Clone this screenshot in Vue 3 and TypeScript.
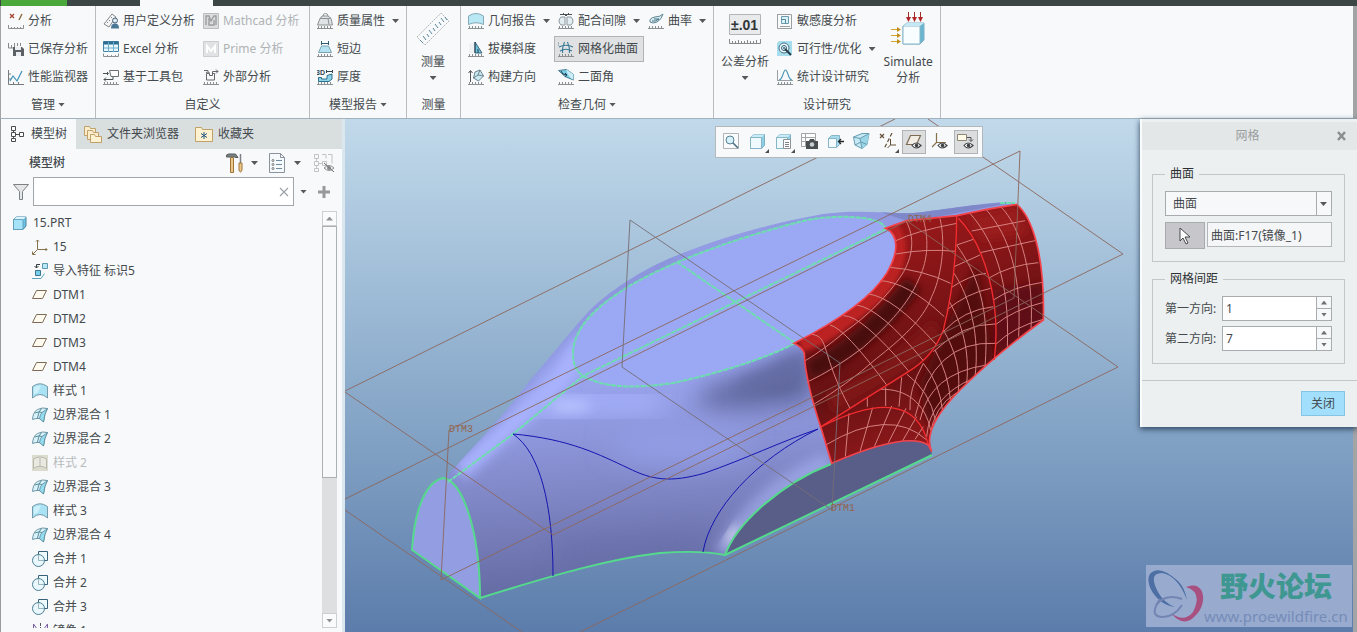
<script setup lang="ts">
import { ref } from 'vue'

interface Command { label: string; icon: string; arrow?: boolean; disabled?: boolean; active?: boolean }
interface Block { big?: boolean; second?: string; items: Command[] }
interface Group { title: string; arrow?: boolean; blocks: Block[] }
interface TreeItem { label: string; icon: string; root?: boolean; dim?: boolean }

const ruler = '<path d="M.5 12v3.500h15V12M3.500 14v1M6.500 14v1M9.500 14v1M12.500 14v1" fill="none" stroke="#8b9093"/>'
const rulerFlat = '<path d="M0 15.500h16M1.500 13v2M4.500 13v2M7.500 13v2M10.500 13v2M13.500 13v2" fill="none" stroke="#8b9093"/>'
const eye = '<path d="M7 12.500q4-5 9 0q-5 5-9 0z" fill="#fff" stroke="#3c4145" stroke-width="1.200"/><circle cx="11.500" cy="12.500" r="1.800" fill="#3c4145"/>'
const cube = '<path d="M1.500 4.500l3-3h11v11l-3 3h-11z" fill="#8fcfe4" stroke="#7fb0c4"/><path d="M1.500 4.500l3-3h11l-3 3z" fill="#c8ebf6"/><path d="M1.500 4.500h11v11h-11z" fill="#eefafe" stroke="#86b5c8"/>'
const blend = '<path d="M.5 12.500Q1 5 5.500 2.500q5-2.500 10-1q-3 4-4 13.500q-2-3-4.500-3.500q-3-.5-6.500 1z" fill="#d8f3fa" stroke="#6f95a4"/><path d="M10 5.500l5.500-4q-3 4-4 13.500l-4-3.500q.5-4 2.500-6z" fill="#93dcf0" stroke="#5b8a9c" stroke-width=".8"/><path d="M3 6q4-2 7-.5M9.500 1.500Q6.500 4 5.500 11" fill="none" stroke="#5b8a9c"/>'
const style = '<path d="M.5 15V3.500Q8-2 15.500 3.500V15Q8 8 .5 15z" fill="#a9e2f4" stroke="#7899a8"/><path d="M2 11.500V4.500Q5 2.500 9 2.500L6 9.500q-2 .5-4 2z" fill="#cdf0fa"/>'

const icons: Record<string, string> = {
  analysis: ruler + '<path d="M2 1l4 4M6 1L2 5" stroke="#a3442e" stroke-width="1.300"/><path d="M14 1l-3 6" stroke="#8a6b3c" stroke-width="1.400"/>',
  saved: '<path d="M.5 2v5h6M3.500 4v3M6.500 2v4M9.500 2v3M12.500 2v3" fill="none" stroke="#85898c"/><path d="M5 6h9l2 2v7H5z" fill="#5c6165"/><path d="M7 6h6v3H7zM8 11h5v4H8z" fill="#eceff1"/>',
  monitor: '<path d="M.5 1v14.500H16M1 5h2M1 10h2M5.500 13v2M10.500 13v2" fill="none" stroke="#767b7e"/><path d="M2 12l3-5 4 5 5-10" fill="none" stroke="#3d92b8" stroke-width="1.200"/>',
  user: '<path d="M1 11L9 1l4 3-7 10z" fill="#f4f5f6" stroke="#85898c"/><path d="M4 9l1 1M6 7l1 1M8 4l1 1" stroke="#85898c"/><circle cx="12" cy="7.500" r="2.500" fill="#dfeaf0" stroke="#45637a"/><path d="M8 15.500q0-5 4-5t4 5z" fill="#4a7896"/>',
  excel: '<path d="M.5.5h15v10H.5z" fill="#e8f7fc" stroke="#4686a5"/><path d="M.5.5h15v3H.5z" fill="#2d6d92"/><path d="M5.500 1v10M10.500 1v10M1 7h14" stroke="#6aaecb"/><path d="M.5 12.500v3h15v-3M4.500 14v1M8.500 14v1M12.500 14v1" fill="none" stroke="#8b9093"/>',
  kit: '<path d="M6.500 1.500h9v6H8z" fill="#fff" stroke="#6b7073"/><path d="M0 4.500h5M4 3l1.500 1.500L4 6M1 10.500h9V8M3 8.500l-2 2 2 2" fill="none" stroke="#4c5154"/>' + rulerFlat,
  mathcad: '<path d="M.5.5h15v15H.5z" fill="#dcddde" stroke="#babcbd"/><path d="M3 12V3h3l2 5 3-5h2v9M6 5v7h5V7" fill="none" stroke="#9b9d9e" stroke-width="1.400"/>',
  prime: '<path d="M.5.5h15v15H.5z" fill="#e1e2e3" stroke="#cbcdce"/><path d="M4 12V5l4 5 4-5v7" fill="none" stroke="#fff" stroke-width="2"/>',
  external: '<path d="M3.500 4.500v6.500h8V4.500h-2v2h-3v-2z" fill="#f7f9fa" stroke="#65696c"/><path d="M1 1.500h4v3M9.500 5V2.500H15M13 .5l2 2-2 2M3 3l2 1.500L6.500 3" fill="none" stroke="#65696c"/>' + rulerFlat,
  mass: rulerFlat + '<path d="M3 5.500L5 3h6l3 2.500 1.500 6.500h-15z" fill="#dfe3e5" stroke="#8b9194"/><path d="M6 3q0-2.500 2.500-2.500T11 3M3 5.500h8l1 6M11 5.500L14 5" fill="none" stroke="#8b9194"/>',
  edge: rulerFlat + '<path d="M4.500 5h7l3 6.500h-13z" fill="#b5e2f0" stroke="#7da3b2"/><path d="M4.500 0v4M11.500 0v4M5 2.500h6" stroke="#335d73"/>',
  thick: rulerFlat + '<text x="-1" y="6" font-family="Liberation Sans" font-size="7" font-weight="bold" fill="#34444e">3D</text><path d="M9 2.500h6M9.500 1v3M15.500 1v3" stroke="#34444e"/><path d="M1.500 8.500h3V10H10V6.500l5-1.500v5l-3 2.500H1.500z" fill="#8fd3e9" stroke="#2f718b"/>',
  measure: '<path d="M1 25L25 1l8 8L9 33z" fill="#f7f9fa" stroke="#b0b5b8" stroke-dasharray="2 1"/><path d="M7 31l-3-3M10 28l-3-4M13 25l-2-3M16 22l-3-4M19 19l-2-3M22 16l-3-4M25 13l-2-3M28 10l-3-4M31 8l-2-3" stroke="#58879b"/>',
  geom: '<path d="M.5 11.500V3Q8-2 15.500 3v8.500Q8 8 .5 11.500z" fill="#b9e8f5" stroke="#84a8b6"/>' + rulerFlat,
  draft: rulerFlat + '<path d="M1 3l6-2v11H1z" fill="#eef1f3"/><path d="M7 1l7 11H7z" fill="#6cc3de" stroke="#40687a"/><path d="M7 12V1M10 8v4" stroke="#243f4d"/>',
  direction: rulerFlat + '<path d="M2.500 13V2M.5 4l2-2.500 2 2.500" fill="none" stroke="#50565a"/><path d="M7 3l5-2 3.500 6-5 5-5-3z" fill="#c9e9f3" stroke="#6d838e"/><path d="M5.500 9L10 6l5.500 1M10 6l2-5" fill="none" stroke="#6d838e"/>',
  clearance: '<path d="M3 4h4v8H3q-4-4 0-8zM9 4h4q4 4 0 8H9z" fill="#e3eef2" stroke="#8d999f"/><path d="M2 1.500h12M5 0l3 3M11 0L8 3" stroke="#4a5054" fill="none"/>' + rulerFlat,
  mesh: rulerFlat + '<path d="M1 6q7-3.500 14 0M2 10q6-3.500 12 0M6.500 1q-2.500 6-2 11M9.500 1q2.500 6 2 11" fill="none" stroke="#3b7a96" stroke-width="1.100"/><path d="M.5 1v4" stroke="#a8b6bd"/>',
  dihedral: '<path d="M.5 1.500l8-1 7 5v5.500L7 7.500z" fill="#7accE5" stroke="#4a7d92"/><path d="M8.500.5l7 5v5.500q-6-3-7-10.500z" fill="#caeef8"/><path d="M3 2q1 4 6 4M7 4l2 2-2 1.500" fill="none" stroke="#22404d"/>' + rulerFlat,
  curve: '<path d="M2 9Q1 5 7 4q5 0 8-3-1 5-6 8-4 2-7 0z" fill="#d8edf3" stroke="#5f8594"/><path d="M4 8q3 1 7-2M6 6h5" fill="none" stroke="#47707f"/>' + rulerFlat,
  tolerance: '<path d="M1.500 2.500h31v20h-31z" fill="#e8eaeb" stroke="#b1b5b8"/><text x="3" y="18" font-family="Liberation Sans" font-size="14" font-weight="bold" fill="#303538">±.01</text><path d="M1.500 27v4.500h31V27M4.500 29v2M7.500 29v2M10.500 28v3M13.500 29v2M16.500 29v2M19.500 28v3M22.500 29v2M25.500 29v2M28.500 28v3" fill="none" stroke="#85898c"/>',
  sensitivity: '<path d="M.5 1v14.500H15M.5 1.500h14v14M3 13.500h10" fill="none" stroke="#9ba0a3"/><path d="M4.500 3.500h7v7h-7z" fill="#d9f2fa" stroke="#6b9aad"/><path d="M4.500 6.500h4v4" fill="none" stroke="#55869a"/>',
  feasible: '<path d="M0 2l2-2h13v13l-2 2H0z" fill="#a7ddec"/><circle cx="7" cy="7" r="5" fill="#eefafd" stroke="#427088"/><circle cx="7" cy="7" r="2.500" fill="none" stroke="#326078"/><circle cx="7" cy="7" r="1" fill="#326078"/><path d="M8 8l6 6" stroke="#253b46" stroke-width="2"/>',
  stats: '<path d="M.5 1v11M0 11.500h16" stroke="#9ba0a3"/><path d="M2 11C6 11 6 1 8.500 1S11 11 15 11" fill="none" stroke="#4996b5" stroke-width="1.200"/>' + rulerFlat,
  simulate: '<path d="M12 14l4-3h17v17l-4 4H12z" fill="#68b5cf" stroke="#7fb2c5"/><path d="M12 14h17v18H12z" fill="#f8fdff" stroke="#88b6c7"/><path d="M12 14l4-3h17l-4 3z" fill="#c4e8f4"/><path d="M17.500 0v6M23.500 0v6M29.500 0v6" stroke="#a02c2c"/><path d="M15 5h5l-2.500 5zM21 5h5l-2.500 5zM27 5h5l-2.500 5z" fill="#b02626"/><path d="M0 17.500h8M0 23.500h8M0 29.500h8" stroke="#d6a62c"/><path d="M6 15v5l4-2.500zM6 21v5l4-2.500zM6 27v5l4-2.500z" fill="#c08f20"/>',
  treeTab: '<path d="M1.500.5h4v4h-4zM1.500 6.500h4v4h-4zM1.500 12.500h4v3h-4zM9.500 6.500h4v4h-4zM3.500 4.500v2M3.500 10.500v2M5.500 8.500h4" fill="#fff" stroke="#484d50"/>',
  folders: '<path d="M.5 1.500h5l1 2h5v7H.5z" fill="#fbeccb" stroke="#c2a069"/><path d="M3.500 5.500h5l1 2h5v7h-11z" fill="#fbeccb" stroke="#c2a069"/><path d="M6.500 9.500h4l1 2h6v6h-11z" fill="#fff2d1" stroke="#c2a069"/>',
  favorite: '<path d="M.5 2.500h6l1 2h10v12H.5z" fill="#fff2d1" stroke="#c2a069"/><path d="M9 7v7M6 8.500l6 4M12 8.500l-6 4" stroke="#225a82"/>',
  hammer: '<path d="M.5 2l2-1h7l2.500 3.500h-2L8.500 4H.5z" fill="#7b8388" stroke="#555a5d"/><path d="M4.500 4.500h3v15h-3z" fill="#edc78a" stroke="#9e7439"/><path d="M14.500 1v9" stroke="#7c8185" stroke-width="1.500"/><path d="M13 10h3v7q-1.500 4-3 0z" fill="#edc78a" stroke="#9e7439"/>',
  list: '<path d="M.5.5h11l4 4v15H.5z" fill="#f7fafd" stroke="#8a939b"/><path d="M11.500.5v4h4" fill="none" stroke="#8a939b"/><circle cx="4" cy="7.500" r="1" fill="none" stroke="#777"/><circle cx="4" cy="11.500" r="1" fill="none" stroke="#777"/><circle cx="4" cy="15.500" r="1" fill="none" stroke="#777"/><path d="M7 7.500h6M7 11.500h6M7 15.500h6" stroke="#6d8ba4"/>',
  hidden: '<path d="M.5 1.500h4v4h-4zM.5 8.500h4v4h-4zM.5 15.500h4v3h-4zM8.500 8.500h4v4h-4zM8 1.500h4v4M14 1.500h4v9M2.500 6v2M2.500 13v2M5 10.500h3" fill="none" stroke="#c0c4c6"/><path d="M10 15q5-5 10 0q-5 5-10 0z" fill="#e9ebec" stroke="#8c9093"/><circle cx="15" cy="15" r="2" fill="#8c9093"/><path d="M10 10l10 9" stroke="#6a6e71"/>',
  funnel: '<path d="M.5.5h15l-6 7v8h-3v-8z" fill="#e4e6e7" stroke="#7b8184"/>',
  part: '<path d="M1.500 4.500l3-2.500h9.500v9L11 14.500H1.500z" fill="#6cc3e2" stroke="#4a87a2"/><path d="M1.500 4.500l3-2.500H14l-3 2.500z" fill="#d8f4fc"/><path d="M1.500 4.500H11v10H1.500z" fill="#a5e3f8" stroke="#5d9bb6" stroke-width=".8"/>',
  csys: '<path d="M5.500 1v9.500H15M5.500 10.500L1 15M4 2.500l1.500-1.500L7 2.500M13.500 9l1.500 1.500-1.500 1.500M.5 12.500V15.500H3.500" fill="none" stroke="#87704c"/>',
  imported: '<path d="M10.500.5h5v5h-5z" fill="#b5e7f6" stroke="#5e97b0"/><path d="M8 1.500H4.500V5M2.500 3l2 2 2-2" fill="none" stroke="#333b40"/><path d="M3.500 7.500h5v5h-5z" fill="#79cfeb" stroke="#39758f"/><path d="M0 15.500h9l3.500-5" fill="none" stroke="#5ba3bf"/>',
  plane: '<path d="M4.500 3.500h10l-4 8H.5z" fill="#fffaf0" stroke="#7d6b55"/>',
  style, blend,
  styleDim: '<path d="M0 0h16v16H0z" fill="#dcdbd0"/><path d="M1.500 13.500V4Q8 0 14.500 4v9.500Q8 9 1.500 13.500z" fill="#e9e9e2" stroke="#b9b9ad"/><path d="M8 3v8" stroke="#b9b9ad"/>',
  merge: '<path d="M6.500.5h9v9h-9z" fill="#eefcff" stroke="#3a617b"/><circle cx="6.500" cy="9.500" r="6" fill="#e5f8fc" fill-opacity=".85" stroke="#4d7d93"/><path d="M6.500 4v5.500H12" fill="none" stroke="#9fb5be"/>',
  mirror: '<path d="M1.500 1v13l5-6zM15.500 1v13l-5-6z" fill="none" stroke="#7a5fa0"/><path d="M8.500 0v16" stroke="#555" stroke-dasharray="3 1"/>',
  zoom: '<path d="M.5.5h15v15H.5z" fill="#f9fbfc" stroke="#b0b4b7"/><circle cx="7" cy="7" r="4" fill="#d7f1fa" stroke="#587f93"/><path d="M10 10l5 5" stroke="#4b6f80" stroke-width="1.600"/>',
  shade: cube,
  views: cube + '<path d="M8.500 6.500h7v9h-7z" fill="#fff" stroke="#8c9295"/><path d="M10 9.500h4M10 11.500h4M10 13.500h4" stroke="#7c8285"/>',
  camera: '<path d="M.5.5h14v13H.5zM.5 4.500h14M.5 8.500h14M4.500.5v13" fill="#fff" stroke="#a0a5a8"/><path d="M5 8h3l1-2h4l1 2h3v8H5z" fill="#494e51"/><circle cx="11" cy="11.500" r="2.300" fill="#c9ced1"/>',
  exit: '<path d="M1.500 5.500l3-3h8v9l-3 3h-8z" fill="#a5dbec" stroke="#86b5c8"/><path d="M1.500 5.500h8v9h-8z" fill="#f3fbfe" stroke="#86b5c8"/><path d="M17 8.500h-5M14 6l-2.500 2.500L14 11" fill="none" stroke="#23292c" stroke-width="1.300"/>',
  perspective: '<path d="M.5 4L9 .5h7l-2 11-5 4L2 12z" fill="#c5eaf5" stroke="#6a9cb0"/><path d="M7 5.500L16 .5l-2 11-5 4z" fill="#9bd5e8"/><path d="M.5 4L7 5.500 16 .5M7 5.500l2 10M2 12l6-3 6 2.500" fill="none" stroke="#6a9cb0"/>',
  datum: '<path d="M1 1l4 4M5 1L1 5" stroke="#665037" stroke-width="1.200"/><path d="M13 0L5 16" stroke="#665037" stroke-width="1.200" stroke-dasharray="4 2"/><path d="M11.500 6v6H17M11.500 12l-3 3" fill="none" stroke="#665037"/>',
  planeEye: '<path d="M5.500 2.500h10l-4 9H1.500z" fill="#f2ede4" stroke="#7d6b55" stroke-width="1.200"/>' + eye,
  csysEye: '<path d="M5.500 0v9.500H15M5.500 9.500L1 14" fill="none" stroke="#87704c" stroke-width="1.200"/>' + eye,
  noteEye: '<path d="M.5 1.500h9v6h-9z" fill="#fffbe8" stroke="#8d8677"/><path d="M10 4.500h4V8M12 6.500l2 2 2-2" fill="none" stroke="#4b5053"/>' + eye,
}

const groups: Group[] = [
  { title: '管理', arrow: true, blocks: [{ items: [{ label: '分析', icon: 'analysis' }, { label: '已保存分析', icon: 'saved' }, { label: '性能监视器', icon: 'monitor' }] }] },
  { title: '自定义', blocks: [
    { items: [{ label: '用户定义分析', icon: 'user' }, { label: 'Excel 分析', icon: 'excel' }, { label: '基于工具包', icon: 'kit' }] },
    { items: [{ label: 'Mathcad 分析', icon: 'mathcad', disabled: true }, { label: 'Prime 分析', icon: 'prime', disabled: true }, { label: '外部分析', icon: 'external' }] },
  ] },
  { title: '模型报告', arrow: true, blocks: [{ items: [{ label: '质量属性', icon: 'mass', arrow: true }, { label: '短边', icon: 'edge' }, { label: '厚度', icon: 'thick' }] }] },
  { title: '测量', blocks: [{ big: true, items: [{ label: '测量', icon: 'measure', arrow: true }] }] },
  { title: '检查几何', arrow: true, blocks: [
    { items: [{ label: '几何报告', icon: 'geom', arrow: true }, { label: '拔模斜度', icon: 'draft' }, { label: '构建方向', icon: 'direction' }] },
    { items: [{ label: '配合间隙', icon: 'clearance', arrow: true }, { label: '网格化曲面', icon: 'mesh', active: true }, { label: '二面角', icon: 'dihedral' }] },
    { items: [{ label: '曲率', icon: 'curve', arrow: true }] },
  ] },
  { title: '设计研究', blocks: [
    { big: true, items: [{ label: '公差分析', icon: 'tolerance', arrow: true }] },
    { items: [{ label: '敏感度分析', icon: 'sensitivity' }, { label: '可行性/优化', icon: 'feasible', arrow: true }, { label: '统计设计研究', icon: 'stats' }] },
    { big: true, second: '分析', items: [{ label: 'Simulate', icon: 'simulate' }] },
  ] },
]

const tree: TreeItem[] = [
  { label: '15.PRT', icon: 'part', root: true },
  { label: '15', icon: 'csys' },
  { label: '导入特征 标识5', icon: 'imported' },
  { label: 'DTM1', icon: 'plane' },
  { label: 'DTM2', icon: 'plane' },
  { label: 'DTM3', icon: 'plane' },
  { label: 'DTM4', icon: 'plane' },
  { label: '样式 1', icon: 'style' },
  { label: '边界混合 1', icon: 'blend' },
  { label: '边界混合 2', icon: 'blend' },
  { label: '样式 2', icon: 'styleDim', dim: true },
  { label: '边界混合 3', icon: 'blend' },
  { label: '样式 3', icon: 'style' },
  { label: '边界混合 4', icon: 'blend' },
  { label: '合并 1', icon: 'merge' },
  { label: '合并 2', icon: 'merge' },
  { label: '合并 3', icon: 'merge' },
  { label: '镜像 1', icon: 'mirror' },
]

const viewTools = [
  { icon: 'zoom', label: '重新调整' },
  { icon: 'shade', label: '显示样式', more: true },
  { icon: 'views', label: '已保存方向', more: true },
  { icon: 'camera', label: '视图管理器' },
  { icon: 'exit', label: '视图法向' },
  { icon: 'perspective', label: '透视图' },
  { icon: 'datum', label: '基准显示', more: true },
  { icon: 'planeEye', label: '平面显示', on: true },
  { icon: 'csysEye', label: '坐标系显示' },
  { icon: 'noteEye', label: '注释显示', on: true },
]

const filter = ref('')
const surfaceKind = ref('曲面')
const surfaceRef = ref('曲面:F17(镜像_1)')
const spacing = ref([{ id: 'dir-1', label: '第一方向:', value: 1 }, { id: 'dir-2', label: '第二方向:', value: 7 }])

const bodyPath = 'M412 553C413 520 420 490 445 478C470 450 505 415 530 380C547 362 565 337 590 310C615 286 650 266 673 257C725 236 773 223 823 214C860 209 890 214 913 213C945 210 985 202 1010 202L1017 206L930 300L870 420L831 464C785 482 738 520 725 555C710 551 690 551 660 553C610 559 560 573 480 598Z'
const topPath = 'M573 353C574 325 600 305 623 290C660 266 730 239 807 220C840 214 882 216 886 229Q896 237 895 250C893 295 845 318 795 343C770 357 720 373 673 383C640 388 610 388 592 380C576 375 573 365 573 353Z'
const redPath = 'M316 235L380 212L530 197L620 178L710 163C755 200 795 310 790 510C700 575 610 650 540 720C480 780 430 850 455 905L445 885C390 850 270 890 155 940L125 840Q75 690 73 610Q65 590 42 580C160 520 270 450 320 370C355 310 360 255 316 235Z'
</script>

<template>
  <div class="app">
    <div class="strip"><i class="strip-file"></i><i class="strip-tab"></i></div>
    <header class="ribbon">
      <section v-for="group in groups" :key="group.title" class="group">
        <div class="blocks">
          <div v-for="(block, b) in group.blocks" :key="b" class="block">
            <button
              v-for="item in block.items" :key="item.label" type="button"
              :class="[block.big ? 'big' : 'cmd', { active: item.active }]" :disabled="item.disabled"
            >
              <svg :class="block.big ? 'icon-big' : 'icon'" :viewBox="block.big ? '0 0 34 34' : '0 0 16 16'" aria-hidden="true" v-html="icons[item.icon]"></svg>
              <span>{{ item.label }}</span>
              <span v-if="block.second">{{ block.second }}</span>
              <i v-if="item.arrow" class="arrow"></i>
            </button>
          </div>
        </div>
        <h2 class="group-title">{{ group.title }}<i v-if="group.arrow" class="arrow"></i></h2>
      </section>
    </header>

    <main class="main">
      <aside class="side">
        <nav class="tabs">
          <button type="button" class="tab selected"><svg class="icon" viewBox="0 0 16 16" v-html="icons.treeTab"></svg>模型树</button>
          <button type="button" class="tab"><svg class="icon-mid" viewBox="0 0 18 18" v-html="icons.folders"></svg>文件夹浏览器</button>
          <button type="button" class="tab"><svg class="icon-mid" viewBox="0 0 18 18" v-html="icons.favorite"></svg>收藏夹</button>
        </nav>
        <div class="tree-head">
          <h3>模型树</h3>
          <button type="button" class="head-tool" aria-label="设置"><svg class="icon-head" viewBox="0 0 18 20" v-html="icons.hammer"></svg><i class="arrow"></i></button>
          <button type="button" class="head-tool" aria-label="显示"><svg class="icon-head" viewBox="0 0 18 20" v-html="icons.list"></svg><i class="arrow"></i></button>
          <button type="button" class="head-tool" aria-label="隐藏" disabled><svg class="icon-wide" viewBox="0 0 20 20" v-html="icons.hidden"></svg></button>
        </div>
        <div class="search">
          <svg class="icon" viewBox="0 0 16 16" v-html="icons.funnel"></svg>
          <div class="search-box">
            <input v-model="filter" type="text" aria-label="过滤">
            <button type="button" aria-label="清除" @click="filter = ''">
              <svg class="clear" viewBox="0 0 10 10"><path d="M1 1l8 8M9 1L1 9" stroke="#9da2a5" stroke-width="1.200" /></svg>
            </button>
          </div>
          <i class="arrow"></i>
          <button type="button" class="plus" aria-label="添加"><svg class="plus-icon" viewBox="0 0 12 12"><path d="M6 0v12M0 6h12" stroke="#969a9d" stroke-width="3" /></svg></button>
        </div>
        <div class="tree-area">
          <ul class="tree">
            <li v-for="item in tree" :key="item.label" :class="{ root: item.root, dim: item.dim }">
              <svg class="icon" viewBox="0 0 16 16" v-html="icons[item.icon]"></svg><span>{{ item.label }}</span>
            </li>
          </ul>
          <div class="scroll">
            <button type="button" aria-label="向上"><i class="up"></i></button>
            <div class="track"><div class="thumb"></div></div>
            <button type="button" aria-label="向下"><i class="down"></i></button>
          </div>
        </div>
      </aside>

      <section class="view">
        <svg class="scene" viewBox="345 119 1012 513" preserveAspectRatio="xMinYMin slice" aria-label="15.PRT">
          <defs>
            <linearGradient id="shell" x1="0" y1="0" x2="0.12" y2="1">
              <stop offset="0" stop-color="#8c95dc" /><stop offset=".45" stop-color="#9ca7f2" />
              <stop offset=".62" stop-color="#8d96da" /><stop offset=".85" stop-color="#757cb8" /><stop offset="1" stop-color="#656ba3" />
            </linearGradient>
            <linearGradient id="ruby" x1="0.2" y1="0" x2="0.55" y2="1">
              <stop offset="0" stop-color="#a51b1c" /><stop offset=".35" stop-color="#861517" />
              <stop offset=".65" stop-color="#661113" /><stop offset="1" stop-color="#9c1b1d" />
            </linearGradient>
            <clipPath id="shell-clip"><path :d="bodyPath" /></clipPath>
            <clipPath id="ruby-clip"><path :d="redPath" /></clipPath>
            <filter id="soft" x="-60%" y="-60%" width="220%" height="220%"><feGaussianBlur stdDeviation="13" /></filter>
            <filter id="softer" x="-60%" y="-60%" width="220%" height="220%"><feGaussianBlur stdDeviation="6" /></filter>
          </defs>

          <path :d="bodyPath" fill="url(#shell)" />
          <g clip-path="url(#shell-clip)">
            <path d="M445 475L535 372L600 300L680 255" fill="none" stroke="#8089cc" stroke-width="8" filter="url(#softer)" opacity=".7" />
            <path d="M460 472L560 380L585 340" fill="none" stroke="#a9b3ff" stroke-width="18" filter="url(#softer)" />
            <path d="M530 412Q580 395 660 405" fill="none" stroke="#a5b0fb" stroke-width="24" filter="url(#soft)" />
            <ellipse cx="570" cy="406" rx="20" ry="6" fill="#b9c4ff" filter="url(#softer)" />
            <path d="M700 392Q760 372 808 342L815 400Q770 408 700 408z" fill="#5c6398" filter="url(#soft)" />
            <path d="M740 380Q780 366 806 350L808 376Q770 390 740 390z" fill="#666da6" filter="url(#softer)" opacity=".8" />
            <ellipse cx="680" cy="445" rx="70" ry="20" fill="#929ce4" filter="url(#soft)" />
            <path d="M560 600L560 540L700 530L700 600z" fill="#686ea8" filter="url(#soft)" opacity=".6" />
            <path d="M830 462Q760 490 722 555" fill="none" stroke="#a9b2f2" stroke-width="20" filter="url(#softer)" opacity=".6" />
            <ellipse cx="732" cy="535" rx="3" ry="11" fill="#fff" filter="url(#softer)" transform="rotate(32 732 535)" />
            <path d="M880 212L1015 202L910 222z" fill="#7e88c8" />
          </g>
          <path d="M412 550C414 515 424 482 443 478C462 480 480 530 480 598z" fill="#939ee2" />
          <path d="M725 555C738 520 785 482 831 464C865 447 905 435 930 441L932 455z" fill="#585e88" />
          <path :d="topPath" fill="#9ba8f3" />

          <g class="line green">
            <path d="M412 550C414 515 424 482 443 478C462 480 480 530 480 598z" />
            <path d="M480 598C560 573 610 559 660 553Q700 550 725 555C738 520 785 482 831 464" />
            <path d="M725 555L932 455" />
            <path d="M448 482L513 434L583 376L886 229M677 262L795 343M1000 203L1015 203" class="dotted" />
            <path d="M573 353C574 325 600 305 623 290C660 266 730 239 807 220C840 214 882 216 886 229M795 343C770 357 720 373 673 383C640 388 610 388 592 380C576 375 573 365 573 353" class="dotted" />
          </g>
          <g class="line navy">
            <path d="M513 434C570 439 600 455 628 468C652 480 670 483 705 473C745 459 780 442 818 429" />
            <path d="M513 434C540 452 553 505 553 576M703 552C710 510 755 460 818 429" />
          </g>

          <svg x="780" y="150" width="350" height="320" viewBox="0 0 1050 960">
            <path :d="redPath" fill="url(#ruby)" />
            <g clip-path="url(#ruby-clip)">
              <path d="M85 660C180 630 310 520 400 400" fill="none" stroke="#470c0f" stroke-width="60" filter="url(#soft)" />
              <path d="M330 230C385 290 345 390 260 460S120 570 60 585" fill="none" stroke="#bd2020" stroke-width="44" filter="url(#softer)" />
              <path d="M140 730L310 640L460 510L500 580L340 690L160 790z" fill="#801618" filter="url(#soft)" />
              <path d="M590 340L640 620L440 830L420 700z" fill="#520e11" filter="url(#soft)" />
              <path d="M560 200L710 170L745 250L610 270z" fill="#9a1a1b" filter="url(#soft)" />
              <path d="M640 420L790 400V520L650 620z" fill="#5e1012" filter="url(#soft)" />
            </g>
            <g class="weave">
              <path d="M378 213C405 260 400 320 365 375C325 435 260 500 195 545Q130 600 76 632" />
              <path d="M430 208C450 280 440 340 415 390C385 460 330 520 250 592Q160 660 80 697" />
              <path d="M480 205C500 290 480 390 455 440C430 510 360 570 290 625Q200 705 98 765" />
              <path d="M348 272Q400 245 530 220M347 312Q440 295 528 304M330 352Q430 360 512 400M300 392Q380 395 493 500M265 432Q340 440 470 585M230 465Q300 475 430 632M190 497Q245 495 385 662M150 525Q195 535 320 705M95 553C150 560 120 610 210 775" />
              <path d="M530 285C590 370 630 470 615 650M522 370C570 440 600 560 585 680M508 455C545 520 570 600 560 700M490 540C525 600 542 660 535 725M465 600Q505 670 512 755M430 640Q480 700 488 785M380 672Q450 725 466 810M300 718C380 715 435 760 452 840" />
              <path d="M530 285L580 268M522 350L600 315M515 412Q570 375 618 370M500 480Q560 430 632 415M490 545Q550 480 640 470M460 605Q550 520 645 522M405 800Q460 570 645 580M390 780Q385 720 430 640M420 810Q450 670 620 645M440 860Q450 740 580 685M450 860Q460 770 530 728M262 770V742M317 768V712M357 770L365 682" />
              <path d="M570 190C640 270 690 390 682 590M618 178C690 260 725 380 716 560M662 170C725 230 762 390 753 535" />
              <path d="M575 243L735 212M600 308L765 272M625 385Q690 345 775 338M640 450Q700 410 787 397M645 525Q700 480 790 457M645 585Q700 530 790 508" />
              <path d="M137 885Q330 770 440 870M207 790L196 920M278 773L240 905M335 768L283 890M378 775L325 878M410 800L368 872M430 830L405 868" />
            </g>
            <g class="seams">
              <path d="M530 197C530 320 520 420 490 540Q460 620 385 665L120 832" />
              <path d="M535 205C610 280 665 450 643 630M120 832Q400 690 445 885" />
            </g>
            <path :d="redPath" class="rim" />
          </svg>

          <g class="line datum">
            <path d="M345 391L895 119M928 119L1123 254L553 535L345 392" />
            <path d="M1020 151L449 430L441 580L1014 298z" />
            <path d="M345 499L907 221L1118 367L580 632M345 510L522 632" />
          </g>
          <path class="line datum gray" d="M630 220L840 363L832 510L622 367z" />
          <g class="tags"><text x="908" y="222">DTM4</text><text x="449" y="432">DTM3</text><text x="831" y="511">DTM1</text></g>
        </svg>

        <div class="view-tools">
          <button v-for="tool in viewTools" :key="tool.icon" type="button" :class="{ on: tool.on, more: tool.more }" :aria-label="tool.label">
            <svg class="icon-mid" viewBox="0 0 18 18" v-html="icons[tool.icon]"></svg>
          </button>
        </div>

        <div class="mark">
          <svg class="mark-logo" viewBox="0 0 60 58" aria-hidden="true">
            <path d="M29 40C10 38-2 16 4 7Q13-3 32 14Q39 21 41 33Q32 9 16 6Q2 6 12 25Q18 36 29 40z" fill="#4d6fa3" />
            <path d="M40 20C59 12 62 36 50 48Q38 62 25 46Q38 56 47 45Q57 25 40 20z" fill="#a8507f" />
            <path d="M14 32Q2 50 17 50Q28 50 36 38M10 38Q20 26 36 32" fill="none" stroke="#7384b3" stroke-width="2" />
          </svg>
          <div class="mark-text"><strong>野火论坛</strong><span>www.proewildfire.cn</span></div>
        </div>

        <form class="dialog" @submit.prevent>
          <div class="dialog-title"><span>网格</span>
            <button type="button" aria-label="关闭窗口"><svg class="x" viewBox="0 0 10 10"><path d="M1 1l7 8M8 1L1 9" stroke="#8b8e90" stroke-width="2.500" /></svg></button>
          </div>
          <div class="dialog-body">
            <fieldset>
              <legend>曲面</legend>
              <div class="select">
                <select v-model="surfaceKind" aria-label="曲面"><option>曲面</option></select>
                <i class="arrow"></i>
              </div>
              <div class="pick">
                <button type="button" aria-label="选择"><svg class="cursor" viewBox="0 0 12 18"><path d="M1 1v13l3-3 3 6 2-1-3-6h5z" fill="#fff" stroke="#45484a" /></svg></button>
                <input v-model="surfaceRef" type="text" aria-label="参考" readonly>
              </div>
            </fieldset>
            <fieldset>
              <legend>网格间距</legend>
              <div v-for="row in spacing" :key="row.id" class="spin-row">
                <label :for="row.id">{{ row.label }}</label>
                <div class="spin">
                  <input :id="row.id" v-model.number="row.value" type="number">
                  <div class="steps">
                    <button type="button" aria-label="增加" @click="row.value++"><i class="up"></i></button>
                    <button type="button" aria-label="减少" @click="row.value--"><i class="down"></i></button>
                  </div>
                </div>
              </div>
            </fieldset>
          </div>
          <div class="dialog-foot"><button type="button">关闭</button></div>
        </form>
      </section>
    </main>
  </div>
</template>

<style>
html, body { margin: 0; height: 100%; overflow: hidden; }
#app { height: 100%; }
</style>

<style scoped>
.app { height: 100%; display: flex; flex-direction: column; background: #f7f9fb; color: #44494d; font: 12px/16px "Noto Sans", "Noto Sans CJK SC", sans-serif; }
.app *, .app *::before, .app *::after { box-sizing: border-box; }
button, input, select { font: inherit; color: inherit; margin: 0; padding: 0; border: 0; background: none; border-radius: 0; outline: 0; }
h2, h3, ul { margin: 0; padding: 0; font: inherit; list-style: none; }
svg { flex: none; display: block; }
.icon { width: 16px; height: 16px; }
.icon-mid { width: 18px; height: 18px; }
.icon-big { width: 34px; height: 34px; }
.icon-head { width: 18px; height: 20px; }
.icon-wide { width: 20px; height: 20px; }
.arrow { flex: none; display: block; width: 7px; height: 4px; background: #56595b; clip-path: polygon(0 0, 100% 0, 50% 100%); }
.up, .down { display: block; width: 6px; height: 4px; background: #6d7173; clip-path: polygon(0 0, 100% 0, 50% 100%); }
.up { clip-path: polygon(50% 0, 100% 100%, 0 100%); }

.strip { flex: none; height: 6px; display: flex; background: #3c4645; padding-left: 1px; }
.strip-file { width: 66px; background: #4ba83a; }
.strip-tab { width: 73px; margin-left: 73px; background: #f7f9fb; }
.ribbon { flex: none; height: 113px; display: flex; border-bottom: 1px solid #9fb2bd; border-right: 4px solid #a3a4a6; border-left: 1px solid #a3a4a6; }
.group { display: flex; flex-direction: column; padding: 0 3px; border-right: 1px solid #b9bdc0; }
.group:nth-child(2) { min-width: 214px; }
.group:nth-child(4) { min-width: 54px; }
.blocks { display: flex; height: 85px; padding-top: 1px; }
.block { display: flex; flex-direction: column; }
.cmd { display: flex; align-items: center; gap: 4px; height: 26px; margin: 1px 0; padding: 0 3px; border: 1px solid transparent; white-space: nowrap; }
.cmd .arrow { margin-left: 3px; }
.cmd.active { background: #dfe1e3; border-color: #b1b4b6; }
.cmd:disabled { color: #b0b3b5; }
.big { display: flex; flex-direction: column; align-items: center; min-width: 46px; height: 84px; padding: 5px 4px 0; white-space: nowrap; }
.big .icon-big { margin-bottom: 8px; }
.big .arrow { margin-top: 6px; }
.group-title { display: flex; align-items: center; justify-content: center; gap: 3px; height: 27px; }

.main { flex: 1; min-height: 0; display: flex; }
.side { flex: none; width: 345px; display: flex; flex-direction: column; border-left: 1px solid #999c9e; border-right: 3px solid #dbe7ef; padding-bottom: 4px; }
.tabs { flex: none; display: flex; height: 30px; background: #d9dedf; }
.tab { display: flex; align-items: center; gap: 5px; padding: 0 8px; }
.tab.selected { background: #f7f9fb; padding: 0 9px; }
.tree-head { flex: none; display: flex; align-items: center; height: 28px; padding: 0 8px 0 28px; }
.tree-head h3 { flex: 1; font-weight: 500; }
.head-tool { display: flex; align-items: center; gap: 7px; margin-left: 11px; }
.head-tool:last-child { margin-left: 13px; }
.search { flex: none; display: flex; align-items: center; height: 29px; padding: 0 12px; }
.search-box { flex: 1; display: flex; align-items: center; height: 29px; margin: 0 6px 0 4px; border: 1px solid #a3a6a8; background: #fff; }
.search-box input { flex: 1; min-width: 0; height: 100%; padding: 0 6px; }
.search-box button { padding: 4px; }
.clear { width: 10px; height: 10px; }
.plus { margin-left: 11px; }
.plus-icon { width: 12px; height: 12px; }
.tree-area { flex: 1; min-height: 0; display: flex; margin-top: 5px; }
.tree { flex: 1; overflow: hidden; }
.tree li { display: flex; align-items: center; gap: 5px; height: 24px; padding-left: 31px; }
.tree li.root { padding-left: 11px; }
.tree li.dim { color: #b9bcbe; }
.scroll { width: 15px; margin-right: 5px; display: flex; flex-direction: column; }
.scroll button { flex: none; height: 15px; border: 1px solid #cdd0d2; display: flex; align-items: center; justify-content: center; background: #fafbfc; }
.scroll .up, .scroll .down { width: 7px; background: #8f9395; }
.track { flex: 1; background: #dedfe1; }
.thumb { height: 65%; background: #f8f9fb; border: 1px solid #adb0b2; }

.view { flex: 1; min-width: 0; position: relative; background: linear-gradient(#c1d9ea, #93b2d0 45%, #5c7dab); border-right: 4px solid #a3a4a6; }
.scene { position: absolute; left: 0; top: 0; width: calc(100% + 4px); height: 100%; }
.line { fill: none; stroke-width: 1; }
.green { stroke: #55d98c; stroke-width: 2; }
.green .dotted { stroke-width: 2; stroke: #6ce0ac; stroke-dasharray: 5 1; }
.navy { stroke: #1515b0; }
.weave { fill: none; stroke: #d58080; stroke-width: 3; }
.seams { fill: none; stroke: #f22c2f; stroke-width: 4; }
.rim { fill: none; stroke: #f5434c; stroke-width: 5; }
.datum { stroke: #8c675d; opacity: .9; }
.datum.gray { stroke: #766e76; }
.tags { font: 10px "Liberation Mono", monospace; fill: #93634b; }

.view-tools { position: absolute; left: 370px; top: 7px; display: flex; gap: 2px; height: 32px; padding: 3px 4px; border: 1px solid #b3b8bb; background: #f7f9fb; }
.view-tools button { position: relative; width: 24px; height: 24px; display: flex; align-items: center; justify-content: center; border: 1px solid transparent; }
.view-tools .on { background: #dcdddf; border-color: #b0b3b5; }
.view-tools .more::after { content: ""; position: absolute; right: 0; bottom: 0; width: 4px; height: 4px; background: #4b4f52; clip-path: polygon(100% 0, 100% 100%, 0 100%); }

.mark { position: absolute; right: 1px; bottom: 5px; display: flex; width: 206px; height: 62px; background: #98abcf; }
.mark-logo { width: 60px; height: 58px; margin-top: 2px; }
.mark-text { display: flex; flex-direction: column; align-items: center; margin-left: -2px; }
.mark-text strong { font: 900 28px/41px "Noto Sans CJK SC", sans-serif; color: #3f9791; }
.mark-text span { font-size: 15px; line-height: 21px; color: #758bb7; }

.dialog { position: absolute; right: -4px; top: 0; width: 217px; padding-top: 3px; background: #edf0f1; border-left: 2px solid #fafbfc; box-shadow: 0 2px 6px #2c435f; }
.dialog-title { display: flex; align-items: center; height: 28px; padding: 0 10px; background: #e4e7e8; color: #9a9ea0; }
.dialog-title span { flex: 1; text-align: center; padding-left: 6px; }
.x { width: 10px; height: 10px; }
.dialog-body { display: flex; flex-direction: column; gap: 9px; padding: 16px 12px 16px 10px; }
fieldset { min-width: 0; margin: 0; padding: 9px 12px 12px; border: 1px solid #c4c7c9; }
legend { padding: 0 5px; color: #2d3134; }
.select { position: relative; display: flex; height: 25px; border: 1px solid #a9acae; background: #f7f8f9; }
.select select { appearance: none; flex: 1; padding: 0 22px 0 7px; }
.select .arrow { position: absolute; right: 4px; top: 10px; }
.select::after { content: ""; position: absolute; right: 14px; top: 0; bottom: 0; width: 1px; background: #a9acae; }
.pick { display: flex; gap: 2px; margin-top: 6px; align-items: flex-start; }
.pick button { flex: none; width: 40px; height: 27px; display: flex; align-items: center; justify-content: center; background: #c6c6cb; border: 1px solid #a9acae; }
.cursor { width: 12px; height: 18px; }
.pick input { flex: 1; min-width: 0; height: 25px; padding: 0 3px; border: 1px solid #b4b7b9; background: #f4f6f7; }
.spin-row { display: flex; align-items: center; }
.spin-row + .spin-row { margin-top: 5px; }
.spin-row label { flex: none; width: 57px; white-space: nowrap; }
.spin { flex: 1; min-width: 0; display: flex; height: 25px; border: 1px solid #a9acae; background: #fff; }
.spin input { flex: 1; min-width: 0; padding: 0 3px; appearance: textfield; }
.spin input::-webkit-inner-spin-button { appearance: none; margin: 0; }
.steps { width: 15px; display: flex; flex-direction: column; border-left: 1px solid #a9acae; }
.steps button { flex: 1; display: flex; align-items: center; justify-content: center; background: #f7f8f9; }
.steps button + button { border-top: 1px solid #a9acae; }
.dialog-foot { display: flex; justify-content: flex-end; padding: 10px 12px 11px; border-top: 1px solid #c4c7c9; }
.dialog-foot button { width: 44px; height: 25px; background: #a2dffd; border: 1px solid #84c5e6; }
</style>
